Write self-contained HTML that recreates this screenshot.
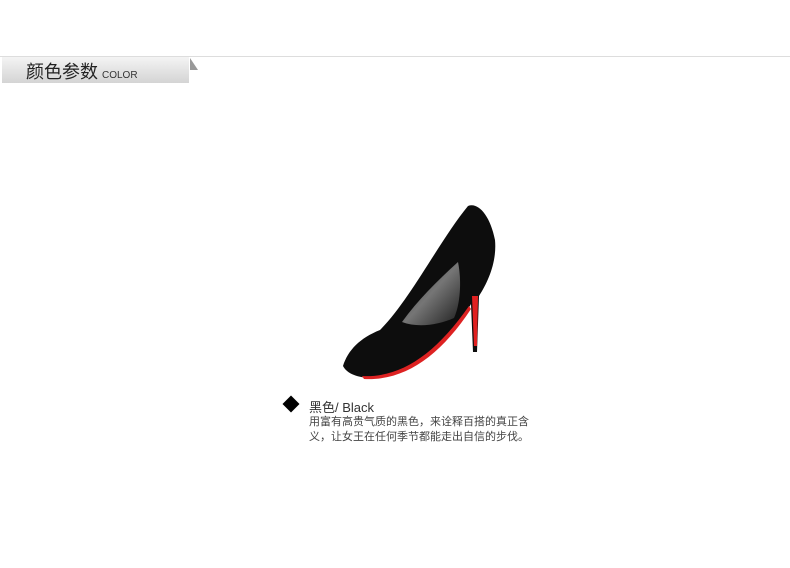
<!DOCTYPE html>
<html><head><meta charset="utf-8"><style>
body{margin:0;width:790px;height:568px;background:#fff;position:relative;overflow:hidden;font-family:"Liberation Sans","Noto Sans CJK SC",sans-serif}
.line{position:absolute;left:0;top:56px;width:790px;height:1px;background:#ddd}
.bar{position:absolute;left:2px;top:57px;width:187px;height:26px;background:linear-gradient(#f4f4f4,#d4d4d4)}
.t{position:absolute;left:26px;top:58px;font-size:18px;color:#222;white-space:nowrap}
.t small{font-size:10px;color:#333;margin-left:4px}
.tri{position:absolute;left:190px;top:58px;width:0;height:0;border-left:8px solid #999;border-top:12px solid transparent}
.d{position:absolute;left:285px;top:398px;width:12px;height:12px;background:#000;transform:rotate(45deg)}
.n{position:absolute;left:309px;top:397px;font-size:13px;color:#333}
.desc{position:absolute;left:309px;top:415px;font-size:11px;line-height:15px;color:#444;width:225px}
</style></head><body>
<div class="line"></div><div class="bar"></div>
<div class="t">颜色参数<small>COLOR</small></div><div class="tri"></div>
<svg style="position:absolute;left:0;top:0" width="790" height="568">
<defs><linearGradient id="g" x1="0" y1="0" x2="1" y2="1"><stop offset="0" stop-color="#333"/><stop offset=".5" stop-color="#888"/><stop offset="1" stop-color="#222"/></linearGradient></defs>
<path d="M343,366 C348,350 360,338 380,330 C410,300 440,240 468,206 C478,202 490,215 495,240 C497,262 488,282 479,296 L477,352 L473,352 L471,304 C455,335 425,362 385,377 C365,380 348,376 343,366 Z" fill="#0d0d0d"/>
<path d="M402,322 C418,300 436,282 458,262 C462,282 460,305 454,318 C438,325 418,328 402,322 Z" fill="url(#g)" opacity=".85"/>
<path d="M472,296 L478,296 L477,346 L474,346 Z" fill="#e02020"/>
<path d="M362,376 C400,378 435,355 469,306 L471,309 C440,356 405,381 364,379 Z" fill="#d22"/>
</svg>
<div class="d"></div>
<div class="n">黑色/ Black</div>
<div class="desc">用富有高贵气质的黑色，来诠释百搭的真正含义，让女王在任何季节都能走出自信的步伐。</div>
</body></html>
